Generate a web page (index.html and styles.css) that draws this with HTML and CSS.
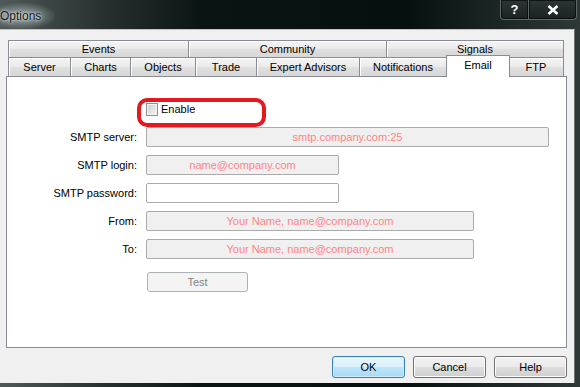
FILE: index.html
```html
<!DOCTYPE html>
<html lang="en">
<head>
  <meta charset="UTF-8" />
  <title>Options</title>
  <link rel="stylesheet" href="styles.css">
</head>
<body>
  <div class="window">
    <div class="titlebar">
      <span class="title">Options</span>
      <div class="caption-buttons">
        <span class="cap-btn cap-help">?</span>
        <span class="cap-btn cap-close">
          <svg width="12" height="10" viewBox="0 0 12 10">
            <path d="M1.5 1 L10.5 9 M10.5 1 L1.5 9" stroke="#fff" stroke-width="2.6" fill="none" />
          </svg>
        </span>
      </div>
    </div>

    <div class="dialog">
      <div class="tabs">
        <div class="tab-row row-top">
          <span class="tab w-events">Events</span>
          <span class="tab w-community">Community</span>
          <span class="tab w-signals last">Signals</span>
        </div>
        <div class="tab-row row-bottom">
          <span class="tab w-server">Server</span>
          <span class="tab w-charts">Charts</span>
          <span class="tab w-objects">Objects</span>
          <span class="tab w-trade">Trade</span>
          <span class="tab w-experts">Expert Advisors</span>
          <span class="tab w-notify">Notifications</span>
          <span class="tab w-email active">Email</span>
          <span class="tab w-ftp last">FTP</span>
        </div>
      </div>

      <div class="panel">
        <div class="form">
          <span></span>
          <label class="enable">
            <span class="checkbox"></span>
            <span>Enable</span>
            <span class="highlight"></span>
          </label>

          <span class="label">SMTP server:</span>
          <input class="field f-server" type="text" value="smtp.company.com:25" disabled>

          <span class="label">SMTP login:</span>
          <input class="field f-short" type="text" value="name@company.com" disabled>

          <span class="label">SMTP password:</span>
          <input class="field f-short f-white" type="password" value="">

          <span class="label">From:</span>
          <input class="field f-mid" type="text" value="Your Name, name@company.com" disabled>

          <span class="label">To:</span>
          <input class="field f-mid" type="text" value="Your Name, name@company.com" disabled>

          <span></span>
          <button class="test-btn" disabled>Test</button>
        </div>
      </div>

      <div class="actions">
        <button class="btn btn-default">OK</button>
        <button class="btn">Cancel</button>
        <button class="btn">Help</button>
      </div>
    </div>
  </div>
</body>
</html>
```

FILE: styles.css
```css
* {
  margin: 0;
  padding: 0;
  box-sizing: border-box;
}

body {
  font-family: 'Liberation Sans', Arial, sans-serif;
  font-size: 11px;
  color: #000;
  background: #0a1212;
  overflow: hidden;
}

.window {
  width: 580px;
  height: 387px;
  display: flex;
  flex-direction: column;
  background: linear-gradient(90deg, #4e5958 0%, #27302f 18%, #0b1414 35%, #061010 70%, #1c2525 85%, #2f3837 100%);
}

/* title bar */

.titlebar {
  height: 29px;
  display: flex;
  justify-content: space-between;
  align-items: flex-start;
  padding-right: 3px;
}

.title {
  margin-top: 3px;
  padding: 6px 14px 6px 0;
  font-size: 12px;
  color: #101414;
  background: radial-gradient(ellipse at 40% 50%, rgba(190,200,200,0.75) 0%, rgba(150,162,162,0.45) 45%, rgba(80,92,92,0) 75%);
  text-shadow: 0 0 4px #d8e0e0, 0 0 2px #e8eeee;
}

.caption-buttons {
  display: flex;
}

.cap-btn {
  height: 20px;
  display: flex;
  align-items: center;
  justify-content: center;
  border: 1px solid #5f6868;
  border-top: none;
  background: linear-gradient(#2c3535, #1a2222);
  color: #fff;
  font-weight: bold;
  font-size: 13px;
  box-shadow: inset 0 0 0 1px rgba(0,0,0,0.6);
}

.cap-help {
  width: 28px;
  border-right: none;
  border-bottom-left-radius: 4px;
}

.cap-close {
  width: 49px;
  border-bottom-right-radius: 4px;
}

/* dialog body */

.dialog {
  width: 575px;
  height: 354px;
  background: #f0f0f0;
  border-right: 1px solid #6c7272;
  border-top: 1px solid #bfc4c4;
  padding: 10px 7px 0 6px;
}

.tabs {
  margin-left: 2px;
  width: 556px;
}

.tab-row {
  display: flex;
  align-items: flex-start;
}

.row-top {
  height: 17px;
}

.row-bottom {
  height: 19px;
}

.tab {
  display: flex;
  align-items: center;
  justify-content: center;
  border-top: 1px solid #898c95;
  border-left: 1px solid #898c95;
  background: linear-gradient(#f4f4f4, #ececec 45%, #dedede 55%, #d8d8d8);
  box-shadow: inset 1px 1px 0 #fff;
  white-space: nowrap;
}

.row-top .tab {
  height: 17px;
}

.row-bottom .tab {
  height: 19px;
}

.tab.last {
  border-right: 1px solid #898c95;
}

.tab.active {
  position: relative;
  z-index: 2;
  height: 22px;
  margin-top: -2px;
  padding-bottom: 3px;
  background: #fff;
  box-shadow: none;
  border-right: 1px solid #898c95;
  margin-right: -1px;
}

.w-events { width: 180px; }
.w-community { width: 198px; }
.w-signals { width: 178px; }
.w-server { width: 62px; }
.w-charts { width: 60px; }
.w-objects { width: 65px; }
.w-trade { width: 61px; }
.w-experts { width: 103px; }
.w-notify { width: 87px; }
.w-email { width: 64px; }
.w-ftp { width: 55px; border-left: none; }

.panel {
  width: 561px;
  height: 272px;
  background: #fff;
  border: 1px solid #898c95;
}

/* form */

.form {
  display: grid;
  grid-template-columns: 131px auto;
  grid-auto-rows: 20px;
  column-gap: 8px;
  row-gap: 8px;
  padding-top: 22px;
  align-items: center;
}

.label {
  text-align: right;
  padding-right: 1px;
  color: #000;
}

.enable {
  position: relative;
  display: flex;
  align-items: center;
  gap: 3px;
}

.checkbox {
  width: 12px;
  height: 13px;
  border: 1px solid #8e8f8f;
  background: linear-gradient(135deg, #cfcfcf, #f4f4f4);
  box-shadow: inset 0 0 0 1px #f4f4f4;
}

.highlight {
  position: absolute;
  left: -9px;
  top: -5px;
  width: 129px;
  height: 29px;
  border: 4px solid #e5171f;
  border-radius: 10px;
}

.field {
  height: 20px;
  border: 1px solid #ababab;
  border-radius: 2px;
  background: #f0f0f0;
  color: #ff8484;
  font-family: inherit;
  font-size: 11px;
  text-align: center;
  outline: none;
}

.field:disabled {
  color: #ff8484;
  background: #f0f0f0;
}

.f-white {
  background: #fff;
}

.f-server { width: 403px; }
.f-short { width: 193px; }
.f-mid { width: 328px; }

.test-btn {
  margin-top: 10px;
  margin-left: 1px;
  width: 101px;
  height: 20px;
  border: 1px solid #adb2b5;
  border-radius: 3px;
  background: #f4f4f4;
  color: #838383;
  font-family: inherit;
  font-size: 11px;
}

/* bottom buttons */

.actions {
  display: flex;
  justify-content: flex-end;
  gap: 8px;
  margin-top: 8px;
}

.btn {
  width: 73px;
  height: 22px;
  border: 1px solid #707070;
  border-radius: 3px;
  background: linear-gradient(#f2f2f2, #ebebeb 48%, #dddddd 52%, #cfcfcf);
  box-shadow: inset 0 0 0 1px #fcfcfc;
  font-family: inherit;
  font-size: 11px;
  color: #000;
}

.btn-default {
  border-color: #3c7fb1;
  background: linear-gradient(#eaf6fd, #d9f0fc 48%, #bee6fd 52%, #a7d9f5);
  box-shadow: inset 0 0 0 1px #cdebfa;
}
```
